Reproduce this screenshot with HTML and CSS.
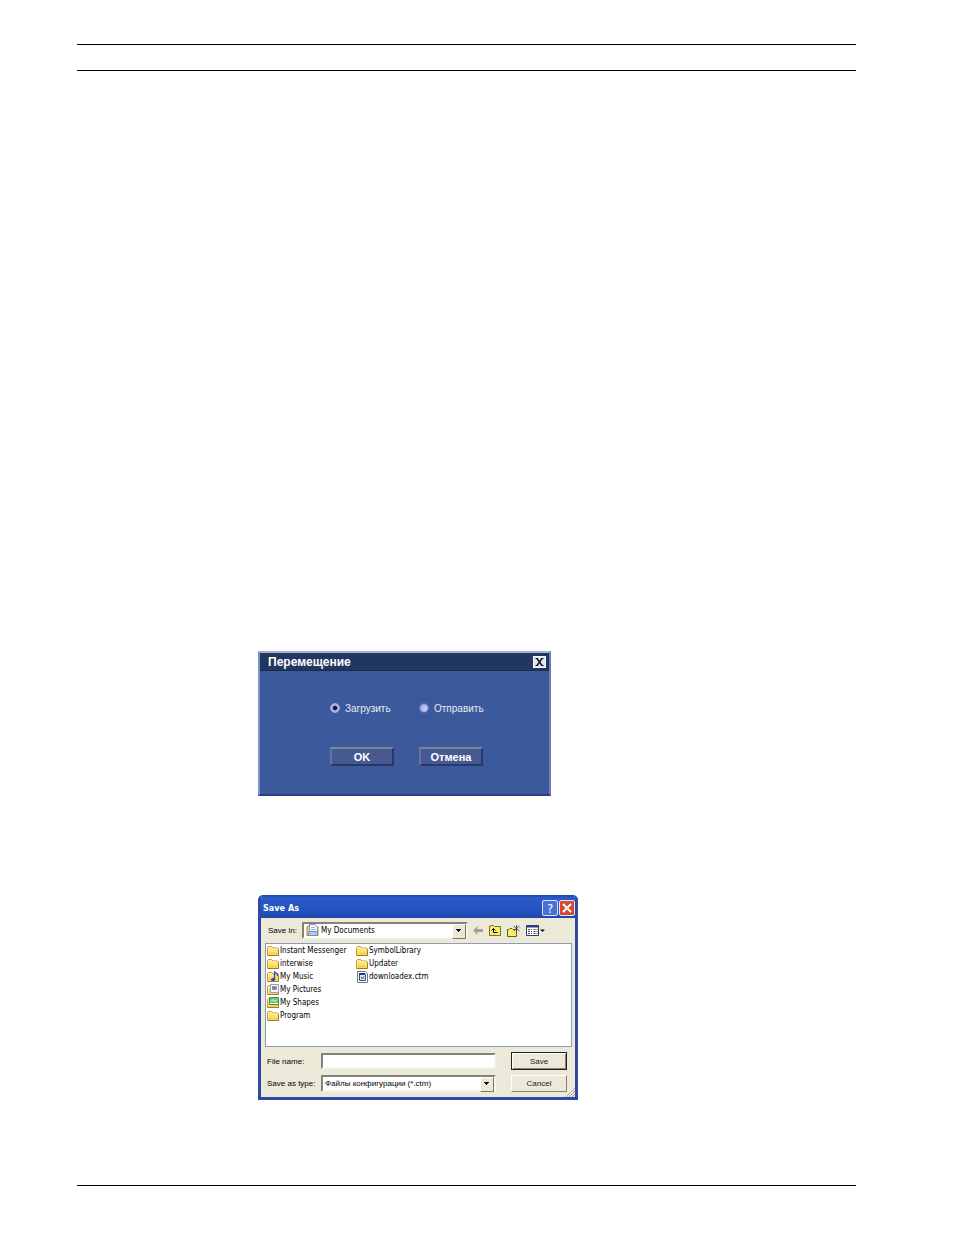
FILE: index.html
```html
<!DOCTYPE html>
<html lang="ru">
<head>
    <meta charset="UTF-8">
    <meta name="viewport" content="width=device-width, initial-scale=1.0">
    <title>Перемещение</title>
    <link rel="stylesheet" href="styles.css">
</head>
<body>
    <!-- shared icons -->
    <svg class="sprite" aria-hidden="true">
        <symbol id="folder" viewBox="0 0 12 12">
            <path d="M.5 10.500V2.500L1.500 1.500H4.500L6 3H10.500L11.500 4V10.500Z" fill="#fbe27a" stroke="#c9982e"/>
            <path d="M1.500 5V3L2 2.500H4L5.500 4H10" fill="none" stroke="#fff6b8"/>
            <path d="M1 10.500H11.500V5" fill="none" stroke="#a87a1c"/>
            <path d="M2 8.500H10.500" stroke="#f5cd50" stroke-width="2"/>
        </symbol>
    </svg>

    <div class="page">
        <header class="page-header"></header>

        <main class="content">
            <form class="transfer">
                <div class="transfer-title">
                    <span>Перемещение</span>
                    <button type="button" class="transfer-close" aria-label="Закрыть">
                        <svg width="9" height="8" viewBox="0 0 9 8"><path d="M2 .5L7 7.500M7 .5L2 7.500" stroke="#111" stroke-width="1.400"/><path d="M.5 .5H3M6 .5H8.500M.5 7.500H3M6 7.500H8.500" stroke="#111"/></svg>
                    </button>
                </div>
                <div class="transfer-grid">
                    <label class="radio"><input type="radio" name="mode" checked>Загрузить</label>
                    <label class="radio"><input type="radio" name="mode">Отправить</label>
                    <button type="button" class="transfer-btn">OK</button>
                    <button type="button" class="transfer-btn">Отмена</button>
                </div>
            </form>

            <form class="save">
                <div class="save-title">
                    <span>Save As</span>
                    <button type="button" class="title-btn help" aria-label="Help">?</button>
                    <button type="button" class="title-btn close" aria-label="Close">
                        <svg width="10" height="10" viewBox="0 0 10 10"><path d="M1 1L9 9M9 1L1 9" stroke="#fff" stroke-width="2"/></svg>
                    </button>
                </div>

                <div class="save-body">
                    <div class="look-in">
                        <label for="dir">Save in:</label>
                        <div class="select-wrap dir">
                            <svg class="dir-icon" width="13" height="13" viewBox="0 0 13 13">
                                <path d="M1 11.500V3L3 1H5L6 3H12V11.500Z" fill="#f5cf55" stroke="#b98a2a"/>
                                <path d="M3.500 .5H9L11.500 3V9H3.500Z" fill="#f2f7ff" stroke="#7f9acb"/>
                                <path d="M5 3.500H9M5 5.500H10" stroke="#9db8e0"/>
                                <path d="M2 11.500L3 7.500H11.500L11 11.500Z" fill="#a9cbf2" stroke="#7890ae"/>
                            </svg>
                            <select id="dir"><option>My Documents</option></select>
                        </div>
                        <div class="tools">
                            <button type="button" aria-label="Back">
                                <svg width="10" height="9" viewBox="0 0 10 9"><path d="M0 4.500L4.500 0V3H10V6H4.500V9Z" fill="#a5a294"/></svg>
                            </button>
                            <button type="button" aria-label="Up one level">
                                <svg width="12" height="11" viewBox="0 0 12 11"><path d="M.5 10.500V1.500H1.500V.5H4.500L5.500 1.500H11.500V10.500Z" fill="#f8f06c" stroke="#77722c"/><path d="M4.500 3.500V7.500H8.500M2.500 5.500L4.500 3.500L6.500 5.500" fill="none" stroke="#111"/></svg>
                            </button>
                            <button type="button" aria-label="New folder">
                                <svg width="13" height="12" viewBox="0 0 13 12"><path d="M.5 11.500V4.500H2L3 3.500H5L6 4.500H9.500V11.500Z" fill="#f8f06c" stroke="#66601f"/><path d="M9.500 0V7M6.500 1L12.500 6M12.500 1L6.500 6" stroke="#333" stroke-width=".8"/></svg>
                            </button>
                            <button type="button" aria-label="Views">
                                <svg width="19" height="11" viewBox="0 0 19 11"><path d="M.5 .5H12.500V10.500H.5Z" fill="#fff" stroke="#333b5c"/><path d="M0 1.500H13" stroke="#27408f" stroke-width="2"/><path d="M2 4.500H6M2 6.500H6M2 8.500H6M7.500 4.500H11.500M7.500 6.500H11.500M7.500 8.500H11.500" stroke="#444" stroke-dasharray="2 1"/><path d="M14 4.500H19L16.500 7Z" fill="#111"/></svg>
                            </button>
                        </div>
                    </div>

                    <ul class="files">
                        <li><svg><use href="#folder"/></svg>Instant Messenger</li>
                        <li><svg><use href="#folder"/></svg>interwise</li>
                        <li><svg viewBox="0 0 12 12"><use href="#folder"/><path d="M7.500 9V1L10.500 3V5" fill="none" stroke="#2f3fc0" stroke-width="1.300"/><ellipse cx="6" cy="8.500" rx="2" ry="1.500" fill="#2f3fc0"/></svg>My Music</li>
                        <li><svg viewBox="0 0 12 12"><use href="#folder"/><path d="M3.500 .5H11.500V8.500H3.500Z" fill="#f4f8ff" stroke="#8ba0cc"/><path d="M5 2H10V6H5Z" fill="#6ea0e4"/><circle cx="7" cy="4" r="1.500" fill="#d2603c"/></svg>My Pictures</li>
                        <li><svg viewBox="0 0 12 12"><use href="#folder"/><path d="M2.500 .5H11.500V7.500H2.500Z" fill="#6cc46e" stroke="#3c9a48"/><path d="M4 4.500L6 2.500L8 4.500L10 2.500M3 6.500H11" fill="none" stroke="#fff"/></svg>My Shapes</li>
                        <li><svg><use href="#folder"/></svg>Program</li>
                        <li><svg><use href="#folder"/></svg>SymbolLibrary</li>
                        <li><svg><use href="#folder"/></svg>Updater</li>
                        <li><svg viewBox="0 0 12 12"><path d="M1.500 .5H9.500L11.500 2.500V11.500H1.500Z" fill="#fff" stroke="#70757f"/><path d="M3 3H9.500" stroke="#1e3a96" stroke-width="2"/><path d="M3.500 4V9.500H9.500V4" fill="#dfe7f5" stroke="#3c4c80"/><path d="M5 6L6.500 8L8 5.500" fill="none" stroke="#27366e"/></svg>downloadex.ctm</li>
                    </ul>

                    <div class="fields">
                        <label for="name">File name:</label>
                        <input id="name" type="text">
                        <button type="button" class="save-btn default">Save</button>
                        <label for="type">Save as type:</label>
                        <div class="select-wrap">
                            <select id="type"><option>Файлы конфигурации (*.ctm)</option></select>
                        </div>
                        <button type="button" class="save-btn">Cancel</button>
                    </div>
                </div>
                <svg class="grip" width="9" height="9" viewBox="0 0 9 9"><path d="M0 9L9 0M3 9L9 3M6 9L9 6" stroke="#aaa797"/></svg>
            </form>
        </main>

        <footer class="page-footer"></footer>
    </div>
</body>
</html>
```
FILE: styles.css
```css
* {
    box-sizing: border-box;
}

body {
    margin: 0;
    background: #fff;
    font-family: "Liberation Sans", Arial, sans-serif;
}

button {
    padding: 0;
    font-family: inherit;
}

svg {
    display: block;
    flex: none;
}

.sprite {
    position: absolute;
    width: 0;
    height: 0;
}

.page {
    padding: 44px 98px 48px 77px;
}

.page-header {
    height: 27px;
    border-top: 1px solid #000;
    border-bottom: 1px solid #000;
}

.page-footer {
    margin-top: 85px;
    border-top: 1px solid #000;
}

.content {
    display: flex;
    flex-direction: column;
    align-items: flex-start;
    gap: 99px;
    padding: 580px 0 0 181px;
}

/* Transfer dialog */
.transfer {
    width: 293px;
    height: 145px;
    background: #3c5a9b;
    border: 2px solid;
    border-color: #a9b1d2 #6f7bb4 #2b3f85 #7d92c6;
    color: #fff;
}

.transfer-title {
    display: flex;
    align-items: center;
    justify-content: space-between;
    height: 18px;
    padding: 0 3px 0 8px;
    background: #22375f;
    border-bottom: 1px solid #1b2a55;
    font-size: 12px;
    font-weight: bold;
}

.transfer-close {
    display: flex;
    align-items: center;
    justify-content: center;
    width: 13px;
    height: 12px;
    background: #dfe5f5;
    border: 1px solid #f4f6ff;
}

.transfer-grid {
    display: grid;
    grid-template-columns: 64px 64px;
    gap: 31px 25px;
    padding: 29px 0 0 70px;
}

.radio {
    display: flex;
    align-items: center;
    gap: 5px;
    height: 16px;
    font-size: 10px;
    color: #e6eaf6;
    white-space: nowrap;
}

.radio input {
    appearance: none;
    flex: none;
    width: 10px;
    height: 10px;
    margin: 0;
    border: 1px solid #6474ba;
    border-radius: 50%;
    background: radial-gradient(circle at 60% 60%, #c8d0f8, #8292dc);
}

.radio input:checked {
    border-color: #a3aee6;
    background: radial-gradient(circle, #101c48 30%, #aab5ec 50%);
}

.transfer-btn {
    height: 19px;
    background: #47598f;
    border: 2px solid;
    border-color: #7b86a0 #283868 #283868 #65759f;
    color: #fff;
    font-size: 11px;
    font-weight: bold;
}

/* Save As dialog */
.save {
    position: relative;
    width: 320px;
    height: 205px;
    background: #ece9d8;
    border: 3px solid #3048a8;
    border-top: 0;
    border-radius: 5px 5px 0 0;
    font-size: 8px;
    overflow: hidden;
}

.save-title {
    display: flex;
    align-items: center;
    gap: 1px;
    height: 23px;
    padding: 3px 0 0 2px;
    background: linear-gradient(#1c48b4, #2a5cc8 3px, #2450bc 18px, #2046a8);
    color: #fff;
    font-family: "DejaVu Sans Condensed", "DejaVu Sans", sans-serif;
    font-size: 9px;
    font-weight: bold;
}

.save-title span {
    flex: 1;
}

.title-btn {
    display: flex;
    align-items: center;
    justify-content: center;
    width: 16px;
    height: 16px;
    border: 1px solid #dce5fa;
    border-radius: 2px;
    color: #fff;
    font-size: 13px;
}

.help {
    background: #4a70d4;
}

.close {
    background: #d9482c;
}

.save-body {
    padding: 4px 3px 0 4px;
}

.look-in {
    display: flex;
    align-items: center;
    height: 17px;
    padding-left: 3px;
}

.look-in label {
    width: 34px;
}

.select-wrap {
    position: relative;
    height: 17px;
}

.select-wrap::after {
    content: "";
    position: absolute;
    top: 2px;
    right: 2px;
    width: 12px;
    height: 13px;
    background: linear-gradient(#111, #111) 3px 4px / 5px 1px no-repeat,
        linear-gradient(#111, #111) 4px 5px / 3px 1px no-repeat,
        linear-gradient(#111, #111) 5px 6px / 1px 1px no-repeat, #ece9d8;
    border: 1px solid;
    border-color: #fff #77746a #77746a #fff;
    pointer-events: none;
}

select,
input[type="text"] {
    appearance: none;
    display: block;
    width: 100%;
    height: 100%;
    margin: 0;
    padding: 0 16px 0 2px;
    background: #fff;
    border: 2px solid;
    border-color: #85827a #f6f4ea #f6f4ea #85827a;
    border-radius: 0;
    color: #000;
    font-family: inherit;
    font-size: inherit;
}

.dir {
    width: 166px;
}

.dir select {
    padding-left: 17px;
    font-family: "DejaVu Sans Condensed", "DejaVu Sans", sans-serif;
}

.dir-icon {
    position: absolute;
    top: 2px;
    left: 4px;
}

.tools {
    display: flex;
    align-items: center;
    gap: 6px;
    padding-left: 5px;
}

.tools button {
    background: none;
    border: 0;
}

.files {
    display: grid;
    grid-template-rows: repeat(6, 13px);
    grid-template-columns: 89px 1fr;
    grid-auto-flow: column;
    height: 104px;
    margin: 4px 0 5px;
    padding: 0 1px;
    background: #fff;
    border: 1px solid #8a9cb8;
    font-family: "DejaVu Sans Condensed", "DejaVu Sans", sans-serif;
    list-style: none;
}

.files li {
    display: flex;
    align-items: center;
    gap: 1px;
    white-space: nowrap;
}

.files svg {
    width: 12px;
    height: 12px;
}

.fields {
    display: grid;
    grid-template-columns: 54px 175px 56px;
    grid-template-rows: 18px 17px;
    row-gap: 5px;
    align-items: center;
    padding-left: 2px;
}

.fields input {
    height: 16px;
}

.save-btn {
    width: 56px;
    height: 17px;
    margin-left: 15px;
    background: #ece9d8;
    border: 1px solid;
    border-color: #fff #85827a #85827a #fff;
    font-size: 8px;
    color: #222;
}

.save-btn.default {
    height: 18px;
    border-color: #222;
    box-shadow: inset 1px 1px #fff, inset -1px -1px #85827a;
}

.grip {
    position: absolute;
    right: 0;
    bottom: 0;
}
```
